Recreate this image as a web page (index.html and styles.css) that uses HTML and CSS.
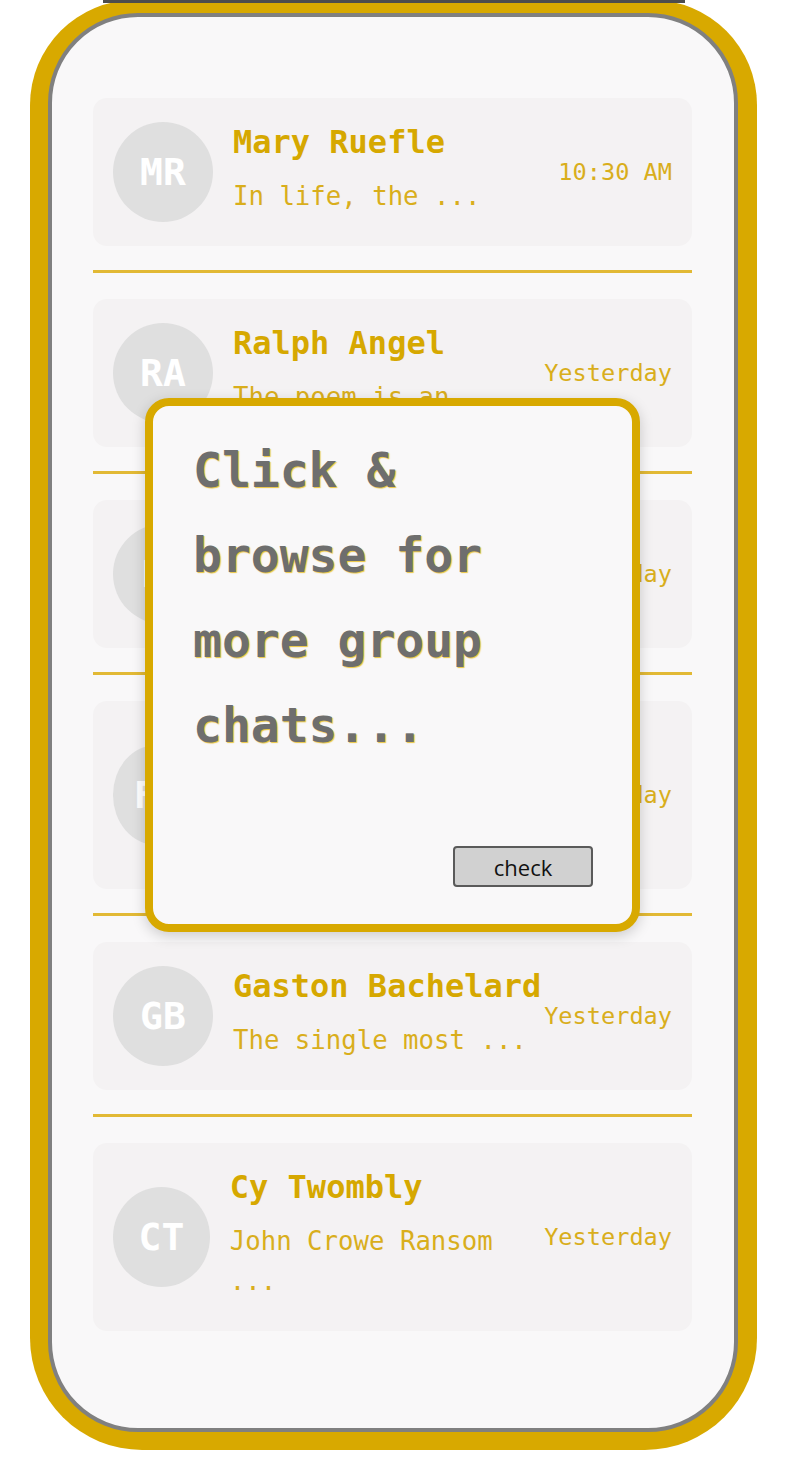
FILE: index.html
```html
<!DOCTYPE html>
<html lang="en">
<head>
<meta charset="utf-8">
<title>Chats</title>
<link rel="stylesheet" href="styles.css">
</head>
<body>
<div class="phone">
  <div class="screen">
    <ul class="chats">
      <li class="chat">
        <div class="avatar">MR</div>
        <div class="body"><div class="name">Mary Ruefle</div><div class="preview">In life, the ...</div></div>
        <div class="time">10:30 AM</div>
      </li>
      <li class="sep"></li>
      <li class="chat">
        <div class="avatar">RA</div>
        <div class="body"><div class="name">Ralph Angel</div><div class="preview">The poem is an ...</div></div>
        <div class="time">Yesterday</div>
      </li>
      <li class="sep"></li>
      <li class="chat">
        <div class="avatar">LH</div>
        <div class="body"><div class="name">Lyn Hejinian</div><div class="preview">Language is ...</div></div>
        <div class="time">Yesterday</div>
      </li>
      <li class="sep"></li>
      <li class="chat">
        <div class="avatar">FO</div>
        <div class="body"><div class="name">Frank O'Hara</div><div class="preview">Grace to be born and ...</div></div>
        <div class="time">Yesterday</div>
      </li>
      <li class="sep"></li>
      <li class="chat">
        <div class="avatar">GB</div>
        <div class="body"><div class="name">Gaston Bachelard</div><div class="preview">The single most ...</div></div>
        <div class="time">Yesterday</div>
      </li>
      <li class="sep"></li>
      <li class="chat">
        <div class="avatar">CT</div>
        <div class="body"><div class="name">Cy Twombly</div><div class="preview">John Crowe Ransom ...</div></div>
        <div class="time">Yesterday</div>
      </li>
    </ul>
  </div>
  <div class="dialog">
    <p class="dialog-text">Click &amp; browse for more group chats...</p>
    <button class="check" type="button">check</button>
  </div>
</div>
</body>
</html>
```
FILE: styles.css
```css
* { box-sizing: border-box; }

html, body {
  margin: 0;
  padding: 0;
  background: #ffffff;
}

body {
  font-family: "DejaVu Sans Mono", "Liberation Mono", monospace;
}

.phone {
  position: relative;
  margin-left: 30px;
  width: 727px;
  height: 1450px;
  padding: 13px 19px 18px 18px;
  background: #d8a900;
  border-radius: 105px 105px 112px 112px;
}

.phone::before {
  content: "";
  position: absolute;
  left: 73px;
  top: 0;
  width: 582px;
  height: 3px;
  background: #4d4d4d;
}

.screen {
  height: 100%;
  border: 4px solid #808080;
  border-radius: 90px;
  background: #f9f8f9;
  overflow: hidden;
}

.chats {
  list-style: none;
  margin: 0;
  padding: 81px 42px 0 41px;
}

.chat {
  display: flex;
  align-items: center;
  padding: 20px;
  background: #f4f2f3;
  border-radius: 14px;
}

.avatar {
  flex: 0 1 100px;
  width: 100px;
  height: 100px;
  margin-right: 20px;
  border-radius: 50%;
  background: #dfdfdf;
  color: #ffffff;
  font-weight: bold;
  font-size: 38px;
  display: flex;
  align-items: center;
  justify-content: center;
}

.body {
  flex: 1 1 auto;
  padding-bottom: 10px;
}

.name {
  font-size: 32px;
  font-weight: bold;
  line-height: 48px;
  color: #d6a800;
  white-space: nowrap;
}

.preview {
  margin-top: 10px;
  font-size: 25.7px;
  line-height: 40px;
  color: #d9ae1c;
}

.time {
  flex: none;
  font-size: 23.6px;
  line-height: 36px;
  color: #d9ae1c;
}

.sep {
  height: 3px;
  margin: 24px 0 26px;
  background: #e2b935;
}

.dialog {
  position: absolute;
  left: 115px;
  top: 398px;
  width: 495px;
  height: 534px;
  border: 8px solid #d8a900;
  border-radius: 24px;
  background: #f9f8f9;
  box-shadow: 0 4px 14px rgba(0, 0, 0, 0.18);
  display: flex;
  flex-direction: column;
  padding: 22px 39px 37px 40px;
}

.dialog-text {
  margin: 0;
  font-size: 48px;
  font-weight: bold;
  line-height: 85px;
  color: #6e6e6e;
  text-shadow: 1px 1px 1px rgba(232, 190, 40, 0.9);
}

.check {
  margin-top: auto;
  align-self: flex-end;
  width: 140px;
  height: 41px;
  padding: 0;
  background: #d1d1d1;
  border: 2px solid #5a5a5a;
  border-radius: 4px;
  font-family: "Open Sans", "Noto Sans", sans-serif;
  font-size: 22px;
  color: #111111;
}
```
